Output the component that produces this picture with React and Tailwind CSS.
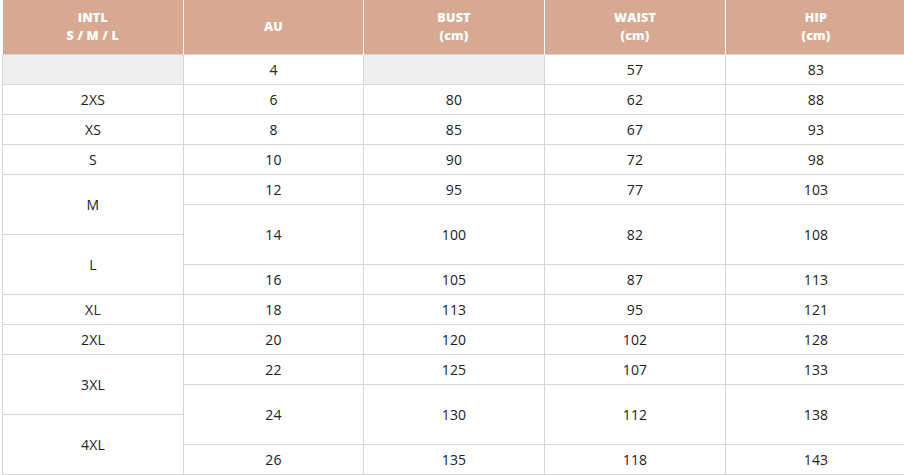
export default function App() {
  const td = "border border-[#d6d6d6] text-center align-middle p-0";
  const th = "border-x border-white bg-[#d8a991] text-white font-extrabold text-[12.5px] leading-[18px] text-center align-middle h-[54px] p-0";
  const tr = "h-[30px]";
  const rows = [
    { intl: { t: "", gray: true }, au: "4", bust: { t: "", gray: true }, waist: "57", hip: "83" },
    { intl: { t: "2XS" }, au: "6", bust: { t: "80" }, waist: "62", hip: "88" },
    { intl: { t: "XS" }, au: "8", bust: { t: "85" }, waist: "67", hip: "93" },
    { intl: { t: "S" }, au: "10", bust: { t: "90" }, waist: "72", hip: "98" },
  ];
  return (
    <div className="w-[904px] h-[475px] overflow-hidden bg-white" style={{ fontFamily: '"Open Sans", "Liberation Sans", sans-serif' }}>
      <table className="ml-[2px] border-collapse table-fixed w-[904px] text-[14px] tracking-[0.2px] text-[#222]">
        <colgroup>
          <col className="w-[181px]" />
          <col className="w-[180px]" />
          <col className="w-[181px]" />
          <col className="w-[181px]" />
          <col className="w-[181px]" />
        </colgroup>
        <thead>
          <tr>
            <th className={th + " border-l-0"}>INTL<br />S / M / L</th>
            <th className={th}>AU</th>
            <th className={th}>BUST<br />(cm)</th>
            <th className={th}>WAIST<br />(cm)</th>
            <th className={th}>HIP<br />(cm)</th>
          </tr>
        </thead>
        <tbody>
          {rows.map((r, i) => (
            <tr key={i} className={tr}>
              <td className={td + (r.intl.gray ? " bg-[#efefef]" : "")}>{r.intl.t}</td>
              <td className={td}>{r.au}</td>
              <td className={td + (r.bust.gray ? " bg-[#efefef]" : "")}>{r.bust.t}</td>
              <td className={td}>{r.waist}</td>
              <td className={td}>{r.hip}</td>
            </tr>
          ))}
          <tr className={tr}>
            <td rowSpan={2} className={td}>M</td>
            <td className={td}>12</td>
            <td className={td}>95</td>
            <td className={td}>77</td>
            <td className={td}>103</td>
          </tr>
          <tr className={tr}>
            <td rowSpan={2} className={td}>14</td>
            <td rowSpan={2} className={td}>100</td>
            <td rowSpan={2} className={td}>82</td>
            <td rowSpan={2} className={td}>108</td>
          </tr>
          <tr className={tr}>
            <td rowSpan={2} className={td}>L</td>
          </tr>
          <tr className={tr}>
            <td className={td}>16</td>
            <td className={td}>105</td>
            <td className={td}>87</td>
            <td className={td}>113</td>
          </tr>
          <tr className={tr}>
            <td className={td}>XL</td>
            <td className={td}>18</td>
            <td className={td}>113</td>
            <td className={td}>95</td>
            <td className={td}>121</td>
          </tr>
          <tr className={tr}>
            <td className={td}>2XL</td>
            <td className={td}>20</td>
            <td className={td}>120</td>
            <td className={td}>102</td>
            <td className={td}>128</td>
          </tr>
          <tr className={tr}>
            <td rowSpan={2} className={td}>3XL</td>
            <td className={td}>22</td>
            <td className={td}>125</td>
            <td className={td}>107</td>
            <td className={td}>133</td>
          </tr>
          <tr className={tr}>
            <td rowSpan={2} className={td}>24</td>
            <td rowSpan={2} className={td}>130</td>
            <td rowSpan={2} className={td}>112</td>
            <td rowSpan={2} className={td}>138</td>
          </tr>
          <tr className={tr}>
            <td rowSpan={2} className={td}>4XL</td>
          </tr>
          <tr className={tr}>
            <td className={td}>26</td>
            <td className={td}>135</td>
            <td className={td}>118</td>
            <td className={td}>143</td>
          </tr>
        </tbody>
      </table>
    </div>
  );
}
